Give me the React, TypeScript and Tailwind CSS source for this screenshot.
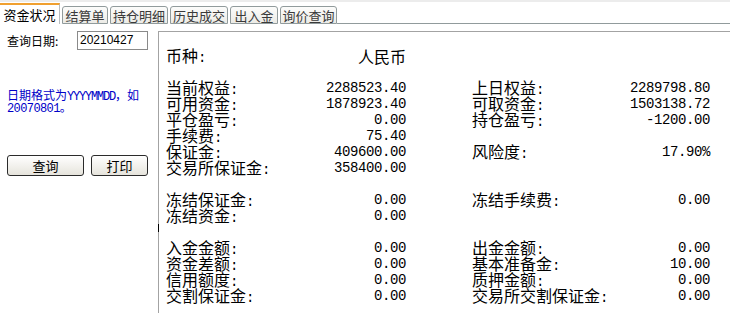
import React from "react";

const cjk = "font-['SimSun','Noto_Sans_CJK_SC',sans-serif]";
const mono = "font-['Liberation_Mono','Noto_Sans_CJK_SC',monospace]";

type Row = [string, string, string, string] | null;

const rows: Row[] = [
  ["当前权益:", "2288523.40", "上日权益:", "2289798.80"],
  ["可用资金:", "1878923.40", "可取资金:", "1503138.72"],
  ["平仓盈亏:", "0.00", "持仓盈亏:", "-1200.00"],
  ["手续费:", "75.40", "", ""],
  ["保证金:", "409600.00", "风险度:", "17.90%"],
  ["交易所保证金:", "358400.00", "", ""],
  null,
  ["冻结保证金:", "0.00", "冻结手续费:", "0.00"],
  ["冻结资金:", "0.00", "", ""],
  null,
  ["入金金额:", "0.00", "出金金额:", "0.00"],
  ["资金差额:", "0.00", "基本准备金:", "10.00"],
  ["信用额度:", "0.00", "质押金额:", "0.00"],
  ["交割保证金:", "0.00", "交易所交割保证金:", "0.00"],
];

const tabs = [
  { name: "结算单", w: "w-[46px]" },
  { name: "持仓明细", w: "w-[58px]" },
  { name: "历史成交", w: "w-[58px]" },
  { name: "出入金", w: "w-[48px]" },
  { name: "询价查询", w: "w-[57px]" },
];

function Label({ text }: { text: string }) {
  // colon is half width in the original font
  const body = text.endsWith(":") ? text.slice(0, -1) : text;
  return (
    <span className={`${cjk} text-[16px] leading-[16px] whitespace-nowrap`}>
      {body}
      {text.endsWith(":") && <span className={`${mono} text-[14px]`}>:</span>}
    </span>
  );
}

function Value({ text }: { text: string }) {
  return <span className={`${mono} text-[14px] leading-[16px] tracking-[-0.4px] whitespace-nowrap`}>{text}</span>;
}

export default function App() {
  return (
    <div className="w-[730px] h-[313px] bg-white overflow-hidden text-black">
      {/* tab strip */}
      <div className="h-[24px] flex items-end bg-[linear-gradient(#ececec_0px,#ececec_2px,#ffffff_2px)]">
        <div className={`${cjk} w-[60px] h-[21px] bg-white border-t-2 border-t-[#f0a030] border-r border-r-[#b7bcc0] flex items-center justify-center text-[13px] leading-none pb-[1px]`}>
          资金状况
        </div>
        {tabs.map((t) => (
          <div
            key={t.name}
            className={`${cjk} ${t.w} ml-[2px] h-[18px] border border-[#919b9c] rounded-t-[3px] bg-[linear-gradient(#fcfcfb,#ecebe6)] flex items-center justify-center text-[13px] leading-none text-[#3a3a3a]`}
          >
            {t.name}
          </div>
        ))}
        <div className="flex-1 h-[1px] bg-[#919b9c]" />
      </div>

      <div className="flex">
        {/* query panel */}
        <div className="w-[158px] shrink-0 pt-[7px]">
          <div className="flex items-center h-[19px]">
            <span className={`${cjk} pl-[7px] w-[77px] text-[12px] leading-none`}>查询日期:</span>
            <div className="w-[71px] h-[19px] border border-[#8a8a8a] font-['Liberation_Sans',sans-serif] text-[12px] leading-none pl-[2px] pt-[2px]">
              20210427
            </div>
          </div>
          <div className={`${cjk} mt-[39px] pl-[7px] text-[12px] leading-[12px] text-[#0000c8]`}>
            <div className="whitespace-nowrap">
              日期格式为<span className={`${mono} text-[12px] tracking-[-1.2px]`}>YYYYMMDD</span>，如
            </div>
            <div className={`${mono} tracking-[-0.6px]`}>20070801。</div>
          </div>
          <div className="mt-[40px] pl-[7px] flex gap-[7px]">
            <button className={`${cjk} w-[77px] h-[21px] rounded-[3px] border border-[#2b2b2b] bg-[linear-gradient(#ffffff,#e6e4dc)] text-[13px] leading-none`}>
              查询
            </button>
            <button className={`${cjk} w-[57px] h-[21px] rounded-[3px] border border-[#2b2b2b] bg-[linear-gradient(#ffffff,#e6e4dc)] text-[13px] leading-none`}>
              打印
            </button>
          </div>
        </div>

        {/* account panel */}
        <div className="relative flex-1 mt-[7px] h-[300px] border-l border-t border-[#a3a3a3] pl-[7px] pt-[16px]">
          <span className="absolute left-[-1px] top-[192px] w-[1px] h-[8px] bg-black" />
          <div className="flex h-[16px]">
            <div className="w-[240px] flex justify-between items-center">
              <Label text="币种:" />
              <span className={`${cjk} text-[16px] leading-[16px]`}>人民币</span>
            </div>
          </div>
          <div className="h-[16px]" />
          {rows.map((r, i) =>
            r ? (
              <div key={i} className="flex h-[16px] items-center">
                <div className="w-[240px] flex justify-between items-center">
                  <Label text={r[0]} />
                  <Value text={r[1]} />
                </div>
                <div className="w-[66px]" />
                <div className="w-[238px] flex justify-between items-center">
                  {r[2] ? <Label text={r[2]} /> : <span />}
                  {r[3] ? <Value text={r[3]} /> : <span />}
                </div>
              </div>
            ) : (
              <div key={i} className="h-[16px]" />
            )
          )}
        </div>
      </div>
    </div>
  );
}
